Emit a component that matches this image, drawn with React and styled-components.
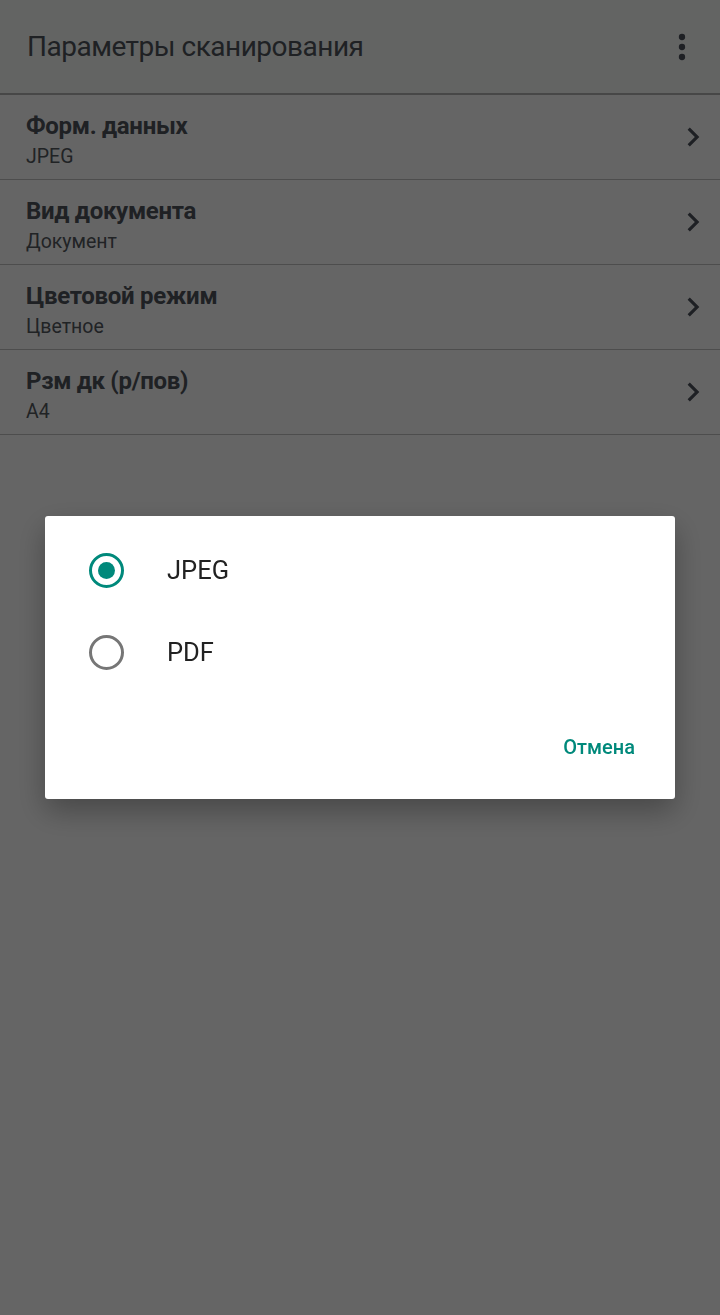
import styled, { createGlobalStyle } from "styled-components";

const GlobalStyle = createGlobalStyle`
  html, body {
    margin: 0;
    padding: 0;
    background: #ffffff;
    font-family: Roboto, "Noto Sans", sans-serif;
  }
`;

const Page = styled.div`
  width: 720px;
  height: 1315px;
  background: #ffffff;
  overflow: hidden;
`;

const Toolbar = styled.header`
  display: flex;
  align-items: center;
  justify-content: space-between;
  height: 93px;
  padding: 0 18px 0 27px;
  background: #f9fcfa;
  border-bottom: 2px solid #b3b3b3;
`;

const Title = styled.h1`
  margin: 0;
  font-size: 28px;
  letter-spacing: -0.5px;
  font-weight: 400;
  color: #4e535b;
`;

const IconButton = styled.button`
  display: flex;
  align-items: center;
  justify-content: center;
  width: 40px;
  height: 40px;
  padding: 0;
  border: 0;
  background: none;
  color: #4c515c;
`;

const Row = styled.div`
  display: flex;
  align-items: center;
  justify-content: space-between;
  height: 84px;
  padding: 0 8px 0 26px;
  border-bottom: 1px solid #c3c3c3;
`;

const RowText = styled.div`
  align-self: flex-start;
  display: flex;
  flex-direction: column;
  gap: 5px;
  padding-top: 17px;
`;

const RowTitle = styled.div`
  font-size: 24px;
  line-height: 28px;
  letter-spacing: -0.3px;
  font-weight: 700;
  color: #4e535b;
`;

const RowValue = styled.div`
  font-size: 19.5px;
  line-height: 24px;
  color: #54585e;
`;

const Chevron = styled.svg`
  width: 38px;
  height: 38px;
  color: #4c515c;
`;

const Overlay = styled.div`
  position: fixed;
  inset: 0;
  background: rgba(0, 0, 0, 0.604);
  display: flex;
  align-items: center;
  justify-content: center;
`;

const Dialog = styled.div`
  width: 630px;
  height: 283px;
  box-sizing: border-box;
  background: #ffffff;
  border-radius: 3px;
  box-shadow: 0 12px 30px rgba(0, 0, 0, 0.3);
  display: flex;
  flex-direction: column;
  padding-top: 13px;
`;

const Option = styled.div`
  display: flex;
  align-items: center;
  height: 82px;
  padding-left: 44px;
  gap: 43px;
`;

const Radio = styled.span`
  box-sizing: border-box;
  width: 35px;
  height: 35px;
  border-radius: 50%;
  border: 3px solid ${(p) => (p.$checked ? "#00897b" : "#767676")};
  display: flex;
  align-items: center;
  justify-content: center;

  &::after {
    content: "";
    width: 17px;
    height: 17px;
    border-radius: 50%;
    background: ${(p) => (p.$checked ? "#00897b" : "transparent")};
  }
`;

const OptionLabel = styled.span`
  font-size: 25.5px;
  line-height: 30px;
  color: #212121;
`;

const Actions = styled.div`
  display: flex;
  justify-content: flex-end;
  margin-top: auto;
  padding: 0 40px 40px 0;
`;

const TextButton = styled.button`
  border: 0;
  background: none;
  padding: 0;
  font-family: Roboto, "Noto Sans", sans-serif;
  font-size: 20px;
  line-height: 24px;
  font-weight: 500;
  color: #00897b;
`;

const settings = [
  { title: "Форм. данных", value: "JPEG" },
  { title: "Вид документа", value: "Документ" },
  { title: "Цветовой режим", value: "Цветное" },
  { title: "Рзм дк (р/пов)", value: "A4" },
];

const options = ["JPEG", "PDF"];

export default function App() {
  const selected = "JPEG";

  return (
    <>
      <GlobalStyle />
      <Page>
        <Toolbar>
          <Title>Параметры сканирования</Title>
          <IconButton aria-label="Меню">
            <svg width="40" height="40" viewBox="0 0 24 24" fill="currentColor">
              <circle cx="12" cy="6" r="1.9" />
              <circle cx="12" cy="12" r="1.9" />
              <circle cx="12" cy="18" r="1.9" />
            </svg>
          </IconButton>
        </Toolbar>
        {settings.map((s) => (
          <Row key={s.title}>
            <RowText>
              <RowTitle>{s.title}</RowTitle>
              <RowValue>{s.value}</RowValue>
            </RowText>
            <Chevron viewBox="0 0 24 24" fill="currentColor">
              <path d="M10 6L8.59 7.41 13.17 12l-4.58 4.59L10 18l6-6z" />
            </Chevron>
          </Row>
        ))}
      </Page>
      <Overlay>
        <Dialog>
          {options.map((o) => (
            <Option key={o}>
              <Radio $checked={o === selected} />
              <OptionLabel>{o}</OptionLabel>
            </Option>
          ))}
          <Actions>
            <TextButton>Отмена</TextButton>
          </Actions>
        </Dialog>
      </Overlay>
    </>
  );
}
